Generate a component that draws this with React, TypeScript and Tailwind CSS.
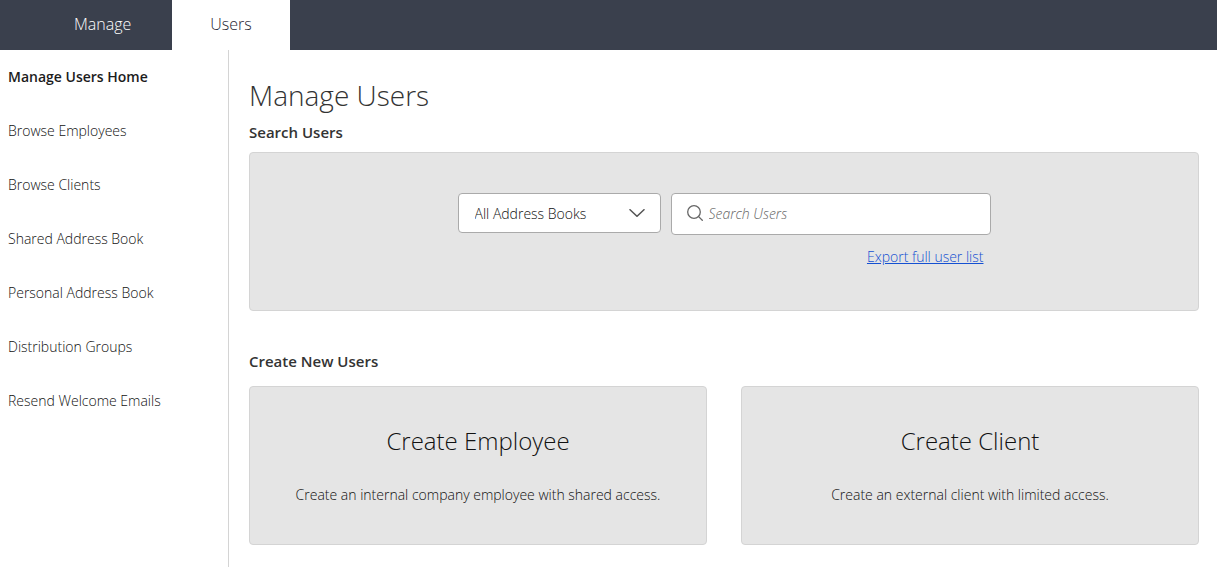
const navItems = [
  'Manage Users Home',
  'Browse Employees',
  'Browse Clients',
  'Shared Address Book',
  'Personal Address Book',
  'Distribution Groups',
  'Resend Welcome Emails',
];

const createCards = [
  { title: 'Create Employee', text: 'Create an internal company employee with shared access.' },
  { title: 'Create Client', text: 'Create an external client with limited access.' },
];

function ChevronDown() {
  return (
    <svg
      className="pointer-events-none absolute top-1/2 right-4 h-2 w-4 -translate-y-1/2"
      viewBox="0 0 16 8"
      fill="none"
      stroke="#555"
      strokeWidth="1.5"
      aria-hidden="true"
    >
      <path d="M0.5 0.3 8 7.3 15.5 0.3" />
    </svg>
  );
}

function SearchIcon() {
  return (
    <svg
      className="pointer-events-none absolute top-3 left-4 size-4"
      viewBox="0 0 16 16"
      fill="none"
      stroke="#666"
      strokeWidth="1.3"
      aria-hidden="true"
    >
      <circle cx="7" cy="7" r="6.3" />
      <path d="m11.4 11.4 4.3 4.3" />
    </svg>
  );
}

export default function App() {
  return (
    <div className="flex min-h-screen flex-col bg-white font-['Open_Sans','Noto_Sans',sans-serif] text-sm font-light text-[#111]">
      <header className="flex h-[50px] bg-[#3a404d] pl-[34px] text-base">
        <a href="#manage" className="flex w-[138px] items-center px-10 pb-0.5 text-white">
          Manage
        </a>
        <a
          href="#users"
          className="flex w-[118px] items-center justify-center bg-white pb-0.5 text-[#1f2533]"
        >
          Users
        </a>
      </header>

      <div className="flex flex-1">
        <nav aria-label="Manage users" className="w-[229px] shrink-0 border-r border-[#d4d4d4]">
          <ul>
            {navItems.map((item, i) => (
              <li key={item}>
                <a
                  href="#item"
                  aria-current={i === 0 ? 'page' : undefined}
                  className={
                    i === 0
                      ? 'flex h-[54px] items-center px-2 font-semibold text-[#1c1c1c]'
                      : 'flex h-[54px] items-center px-2'
                  }
                >
                  {item}
                </a>
              </li>
            ))}
          </ul>
        </nav>

        <main className="flex-1 pt-[25px] pr-[18px] pl-5">
          <h1 className="text-[28px] leading-10 font-light text-[#333]">Manage Users</h1>

          <section className="mt-[5px]">
            <h2 className="text-[15px] leading-6 font-semibold text-[#333]">Search Users</h2>
            <div className="mt-2 flex h-[159px] justify-center rounded border border-[#d4d4d4] bg-[#e5e5e5] pt-10">
              <div>
                <div className="flex items-start gap-[10px]">
                  <div className="relative">
                    <select
                      aria-label="Address book"
                      className="h-10 w-[203px] appearance-none rounded border border-[#aaa] bg-white px-4 pt-0.5"
                    >
                      <option>All Address Books</option>
                    </select>
                    <ChevronDown />
                  </div>
                  <div className="relative">
                    <SearchIcon />
                    <input
                      type="search"
                      aria-label="Search Users"
                      placeholder="Search Users"
                      className="h-[42px] w-80 rounded border border-[#aaa] bg-white pr-4 pb-0.5 pl-[37px] placeholder:text-[#666] placeholder:italic"
                    />
                  </div>
                </div>
                <div className="mt-3 pr-[7px] text-right leading-5">
                  <a href="#export" className="text-[#1450d2] underline">
                    Export full user list
                  </a>
                </div>
              </div>
            </div>
          </section>

          <section className="mt-[38px]">
            <h2 className="text-[15px] leading-6 font-semibold text-[#333]">Create New Users</h2>
            <div className="mt-[13px] grid grid-cols-2 gap-[34px]">
              {createCards.map((card) => (
                <button
                  key={card.title}
                  type="button"
                  className="flex h-[159px] flex-col items-center rounded border border-[#d4d4d4] bg-[#e5e5e5] pt-[38px]"
                >
                  <span className="text-2xl leading-8">{card.title}</span>
                  <span className="mt-7 leading-5">{card.text}</span>
                </button>
              ))}
            </div>
          </section>
        </main>
      </div>
    </div>
  );
}
